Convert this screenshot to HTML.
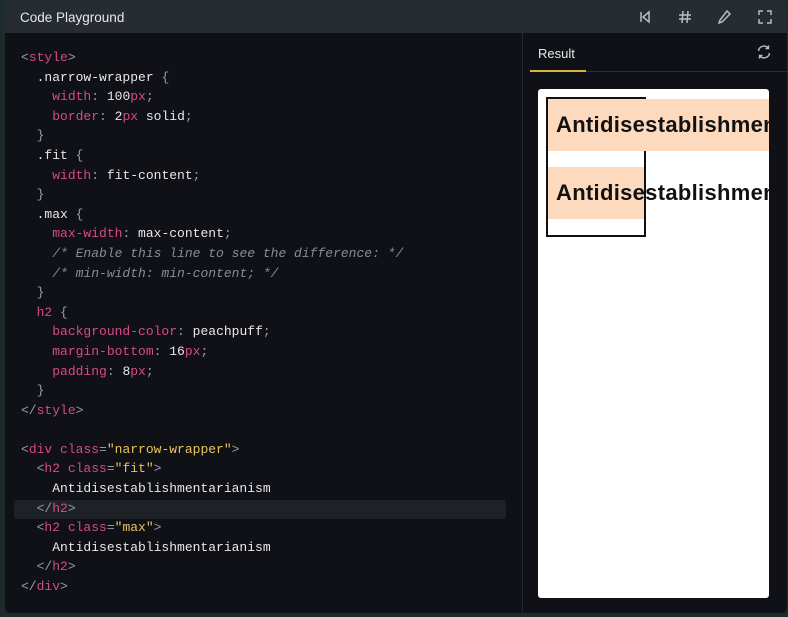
<!DOCTYPE html>
<html><head><meta charset="utf-8"><style>
*{margin:0;padding:0;box-sizing:border-box}
body{width:788px;height:617px;background:#1d2b2a;overflow:hidden;font-family:"Liberation Sans",sans-serif}
.frame{position:absolute;left:4px;top:0;width:784px;height:614px;background:#101116;border-radius:6px;overflow:hidden;border:1px solid #1f2c2b}
.hdr{position:absolute;left:0;top:0;right:0;height:32px;background:#272c33;}
.hdr .t{position:absolute;left:15px;top:9px;color:#e6e8ea;font-size:13.5px}
.ic{position:absolute;top:8px}
.code{position:absolute;left:0;top:32px;width:517px;bottom:0}
pre{position:absolute;left:16px;top:15px;font-family:"Liberation Mono",monospace;font-size:13px;line-height:19.6px;color:#e8e8ea}
.k{color:#d6498c}.p{color:#9a9ca2}.s{color:#e7c45e}.c{color:#8a8c92;font-style:italic}
.hl{position:absolute;left:9px;top:467px;width:492px;height:19px;background:#1e2125;border-radius:3px}
.div{position:absolute;left:517px;top:32px;bottom:0;width:1px;background:#262a30}
.res{position:absolute;left:518px;top:32px;right:0;bottom:0}
.tab{position:absolute;left:15px;top:13px;color:#e6e8ea;font-size:13px}
.ul{position:absolute;left:7px;top:37px;width:56px;height:2px;background:#d9b43a}
.line{position:absolute;left:7px;right:0;top:38px;height:1px;background:#2a2e34}
.ifr{position:absolute;left:15px;top:56px;width:231px;height:509px;background:#fff;border-radius:3px;overflow:hidden}
.wr{position:absolute;left:8px;top:8px;width:100px;height:140px;border:2px solid #111}
h2{position:absolute;left:2px;background:#fdd9bd;font-size:22px;font-weight:bold;color:#111;padding:8px;height:52px;line-height:36px;white-space:nowrap;letter-spacing:0.3px}
</style></head><body>
<div class="frame">
<div class="hdr"><div class="t">Code Playground</div>
<svg class="ic" style="left:632px" width="16" height="16" viewBox="0 0 16 16" fill="none" stroke="#b8bcc2" stroke-width="1.5"><path d="M4 3v10M12 3L6 8l6 5z"/></svg>
<svg class="ic" style="left:672px" width="16" height="16" viewBox="0 0 16 16" fill="none" stroke="#b8bcc2" stroke-width="1.5"><path d="M6 2L5 14M11 2l-1 12M2 6h12M2 10h12"/></svg>
<svg class="ic" style="left:711px" width="16" height="16" viewBox="0 0 16 16" fill="none" stroke="#b8bcc2" stroke-width="1.5"><path d="M11 2l3 3-8 8-3 1 1-3z"/></svg>
<svg class="ic" style="left:752px" width="16" height="16" viewBox="0 0 16 16" fill="none" stroke="#b8bcc2" stroke-width="1.5"><path d="M2 6V2h4M10 2h4v4M14 10v4h-4M6 14H2v-4"/></svg>
</div>
<div class="code">
<div class="hl"></div>
<pre><span class="p">&lt;</span><span class="k">style</span><span class="p">&gt;</span>
  .narrow-wrapper <span class="p">{</span>
    <span class="k">width</span><span class="p">:</span> 100<span class="k">px</span><span class="p">;</span>
    <span class="k">border</span><span class="p">:</span> 2<span class="k">px</span> solid<span class="p">;</span>
  <span class="p">}</span>
  .fit <span class="p">{</span>
    <span class="k">width</span><span class="p">:</span> fit-content<span class="p">;</span>
  <span class="p">}</span>
  .max <span class="p">{</span>
    <span class="k">max-width</span><span class="p">:</span> max-content<span class="p">;</span>
    <span class="c">/* Enable this line to see the difference: */</span>
    <span class="c">/* min-width: min-content; */</span>
  <span class="p">}</span>
  <span class="k">h2</span> <span class="p">{</span>
    <span class="k">background-color</span><span class="p">:</span> peachpuff<span class="p">;</span>
    <span class="k">margin-bottom</span><span class="p">:</span> 16<span class="k">px</span><span class="p">;</span>
    <span class="k">padding</span><span class="p">:</span> 8<span class="k">px</span><span class="p">;</span>
  <span class="p">}</span>
<span class="p">&lt;/</span><span class="k">style</span><span class="p">&gt;</span>

<span class="p">&lt;</span><span class="k">div class</span><span class="p">=</span><span class="s">"narrow-wrapper"</span><span class="p">&gt;</span>
  <span class="p">&lt;</span><span class="k">h2 class</span><span class="p">=</span><span class="s">"fit"</span><span class="p">&gt;</span>
    Antidisestablishmentarianism
  <span class="p">&lt;/</span><span class="k">h2</span><span class="p">&gt;</span>
  <span class="p">&lt;</span><span class="k">h2 class</span><span class="p">=</span><span class="s">"max"</span><span class="p">&gt;</span>
    Antidisestablishmentarianism
  <span class="p">&lt;/</span><span class="k">h2</span><span class="p">&gt;</span>
<span class="p">&lt;/</span><span class="k">div</span><span class="p">&gt;</span></pre>
</div>
<div class="div"></div>
<div class="res">
<div class="tab">Result</div>
<svg style="position:absolute;left:232px;top:10px" width="18" height="18" viewBox="0 0 18 18" fill="none" stroke="#b8bcc2" stroke-width="1.4"><path d="M3.5 8a5.5 5.5 0 0 1 10-2.5M14.5 10a5.5 5.5 0 0 1-10 2.5M13.5 2.5v3h-3M4.5 15.5v-3h3"/></svg>
<div class="line"></div><div class="ul"></div>
<div class="ifr">
<div class="wr"></div>
<h2 style="top:10px;left:10px;width:300px">Antidisestablishmentarianism</h2>
<h2 style="top:78px;left:10px;width:96px;overflow:visible">Antidisestablishmentarianism</h2>
</div>
</div>
</div>
</body></html>
